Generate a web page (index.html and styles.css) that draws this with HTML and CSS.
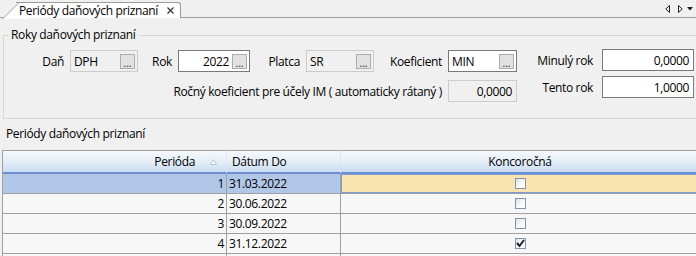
FILE: index.html
```html
<!DOCTYPE html>
<html lang="sk">
<head>
    <meta charset="UTF-8">
    <title>Periódy daňových priznaní</title>
    <link rel="stylesheet" href="styles.css">
</head>
<body>
    <!-- Tab strip -->
    <div class="tabstrip">
        <div class="tab">
            <span class="tab-title">Periódy daňových priznaní</span>
            <svg class="tab-close" width="7" height="7" viewBox="0 0 7 7"><path d="M0.5 0.5L6.5 6.5M6.5 0.5L0.5 6.5" stroke="#333" stroke-width="1.2"/></svg>
        </div>
        <div class="tab-nav">
            <svg class="nav-left" width="5" height="8" viewBox="0 0 5 8"><path d="M4.5 0.5L0.8 4L4.5 7.5Z" fill="none" stroke="#222"/></svg>
            <svg class="nav-right" width="5" height="8" viewBox="0 0 5 8"><path d="M0.5 0.5L4.2 4L0.5 7.5Z" fill="none" stroke="#222"/></svg>
            <svg class="nav-menu" width="6" height="4" viewBox="0 0 6 4"><path d="M0 0H6L3 3.5Z" fill="#222"/></svg>
        </div>
    </div>

    <!-- Roky -->
    <fieldset class="group">
        <legend>Roky daňových priznaní</legend>
        <div class="fields">
            <div class="left">
                <div class="row">
                    <span class="lbl w-dan">Daň</span>
                    <div class="inp ro w68"><span class="val">DPH</span><span class="btn">...</span></div>
                    <span class="lbl w-rok">Rok</span>
                    <div class="inp w72"><span class="val num">2022</span><span class="btn">...</span></div>
                    <span class="lbl w-platca">Platca</span>
                    <div class="inp ro w68"><span class="val">SR</span><span class="btn">...</span></div>
                    <span class="lbl w-koef">Koeficient</span>
                    <div class="inp w69"><span class="val">MIN</span><span class="btn">...</span></div>
                </div>
                <div class="row">
                    <span class="lbl w-rocny">Ročný koeficient pre účely IM ( automaticky rátaný )</span>
                    <div class="inp ro w69"><span class="val num">0,0000</span></div>
                </div>
            </div>
            <div class="right">
                <div class="row">
                    <span class="lbl w-year">Minulý rok</span>
                    <div class="inp w92"><span class="val num">0,0000</span></div>
                </div>
                <div class="row">
                    <span class="lbl w-year">Tento rok</span>
                    <div class="inp w92"><span class="val num">1,0000</span></div>
                </div>
            </div>
        </div>
    </fieldset>

    <!-- Periódy -->
    <div class="section-title">Periódy daňových priznaní</div>
    <div class="grid">
        <div class="h h-num">Perióda
            <svg class="sort" width="7" height="6" viewBox="0 0 7 6"><path d="M3.5 0.5L6.5 5.5H0.5Z" fill="#fff" stroke="#b8c2cc"/></svg>
        </div>
        <div class="h h-left">Dátum Do</div>
        <div class="h h-center">Koncoročná</div>

        <div class="c num sel">1</div>
        <div class="c sel">31.03.2022</div>
        <div class="c center focus"><span class="cb"></span></div>

        <div class="c num">2</div>
        <div class="c">30.06.2022</div>
        <div class="c center"><span class="cb"></span></div>

        <div class="c num">3</div>
        <div class="c">30.09.2022</div>
        <div class="c center"><span class="cb"></span></div>

        <div class="c num">4</div>
        <div class="c">31.12.2022</div>
        <div class="c center"><span class="cb checked"><svg width="9" height="9" viewBox="0 0 9 9"><path d="M1 4L3.5 7L8 1" fill="none" stroke="#1c2230" stroke-width="2"/></svg></span></div>

        <div class="c num"></div>
        <div class="c"></div>
        <div class="c center"></div>
    </div>
</body>
</html>
```

FILE: styles.css
```css
/* General */
* {
    box-sizing: border-box;
}

html, body {
    margin: 0;
    padding: 0;
}

body {
    width: 696px;
    height: 256px;
    overflow: hidden;
    background-color: #f0f0f0;
    font-family: "Open Sans", sans-serif;
    font-size: 12px;
    letter-spacing: -0.35px;
    color: #000;
}

/* Tab strip */
.tabstrip {
    display: flex;
    height: 18px;
    border-bottom: 1px solid #a0a0a0;
}

.tab {
    position: relative;
    z-index: 0;
    display: flex;
    align-items: center;
    margin: 2px 0 -1px 16px;
    width: 165px;
    height: 16px;
    background-color: #fff;
    border-top: 1px solid #9c9c9c;
    border-right: 1px solid #9c9c9c;
    border-top-right-radius: 3px;
    padding-left: 3px;
}

.tab::before {
    content: "";
    position: absolute;
    z-index: -1;
    left: -14px;
    top: -1px;
    width: 24px;
    height: 16px;
    background-color: #fff;
    border-top: 1px solid #9c9c9c;
    border-left: 1px solid #9c9c9c;
    transform: skewX(-45deg);
    transform-origin: bottom left;
}

.tab-title {
    line-height: 14px;
}

.tab-close {
    margin-left: auto;
    margin-right: 6px;
}

.tab-nav {
    margin-left: auto;
    display: flex;
    align-items: center;
}

.nav-left {
    margin-right: 8px;
}

.nav-right {
    margin-right: 4px;
}

.nav-menu {
    margin-right: 3px;
}

/* Group box */
.group {
    margin: 9px -12px 0 3px;
    padding: 6px 0 16px 0;
    border: 1px solid #d5d5d5;
    min-width: 0;
}

.group legend {
    margin-left: 4px;
    padding: 0 3px;
    line-height: 16px;
}

.fields {
    display: flex;
}

.left {
    display: flex;
    flex-direction: column;
    gap: 8px;
    width: 513px;
    margin-top: 1px;
}

.right {
    display: flex;
    flex-direction: column;
    gap: 5px;
}

.row {
    display: flex;
    align-items: center;
    height: 22px;
}

.lbl {
    flex-shrink: 0;
    margin-right: 6px;
    text-align: right;
    white-space: nowrap;
}

.w-dan { width: 60px; }
.w-rok { width: 34px; }
.w-platca { width: 50px; }
.w-koef { width: 68px; }
.w-rocny { width: 438px; }
.w-year { width: 76px; margin-right: 9px; }

/* Inputs */
.inp {
    flex-shrink: 0;
    display: flex;
    align-items: center;
    height: 22px;
    padding: 0 2px 0 3px;
    background-color: #fff;
    border: 1px solid #7a7a7a;
}

.inp.ro {
    background-color: #f0f0f0;
    border-color: #cccccc;
}

.w68 { width: 68px; }
.w69 { width: 69px; }
.w72 { width: 72px; }
.w92 { width: 92px; }

.val {
    flex: 1;
    white-space: nowrap;
}

.val.num {
    text-align: right;
    padding-right: 2px;
}

.btn {
    width: 15px;
    height: 15px;
    margin-left: 1px;
    border: 1px solid #adadad;
    background-color: #e1e1e1;
    font-size: 10px;
    line-height: 16px;
    text-align: center;
    letter-spacing: 0;
    color: #222;
}

/* Periods grid */
.section-title {
    margin: 7px 0 0 6px;
    line-height: 16px;
}

.grid {
    display: grid;
    grid-template-columns: 224px 114px 1fr;
    margin: 8px -4px 0 2px;
    border-left: 1px solid #a0a0a0;
    border-top: 1px solid #a0a0a0;
}

.h {
    display: flex;
    align-items: center;
    height: 23px;
    padding: 0 5px;
    background: linear-gradient(#f6f9fc, #e3edf8 55%, #c9dcf2);
    border-right: 1px solid #dbe6f3;
    border-bottom: 2px solid #6b8fd1;
}

.h-num {
    justify-content: flex-end;
    padding-right: 9px;
}

.sort {
    margin-left: 15px;
}

.h-center {
    justify-content: center;
}

.c {
    display: flex;
    align-items: center;
    height: 20px;
    padding: 0 2px;
    background-color: #f7f7f7;
    border-right: 1px solid #a0a0a0;
    border-bottom: 1px solid #a0a0a0;
}

.c.num {
    justify-content: flex-end;
}

.c.center {
    justify-content: center;
}

.c.sel {
    background-color: #b0c7e7;
}

.c.focus {
    background-color: #f9e4b0;
    box-shadow: inset 0 0 0 1px #7a9cd3;
}

/* Checkbox */
.cb {
    display: flex;
    align-items: center;
    justify-content: center;
    width: 11px;
    height: 11px;
    border: 1px solid #8393a8;
    background: linear-gradient(135deg, #dde3eb, #fdfdfd 70%);
}
```
